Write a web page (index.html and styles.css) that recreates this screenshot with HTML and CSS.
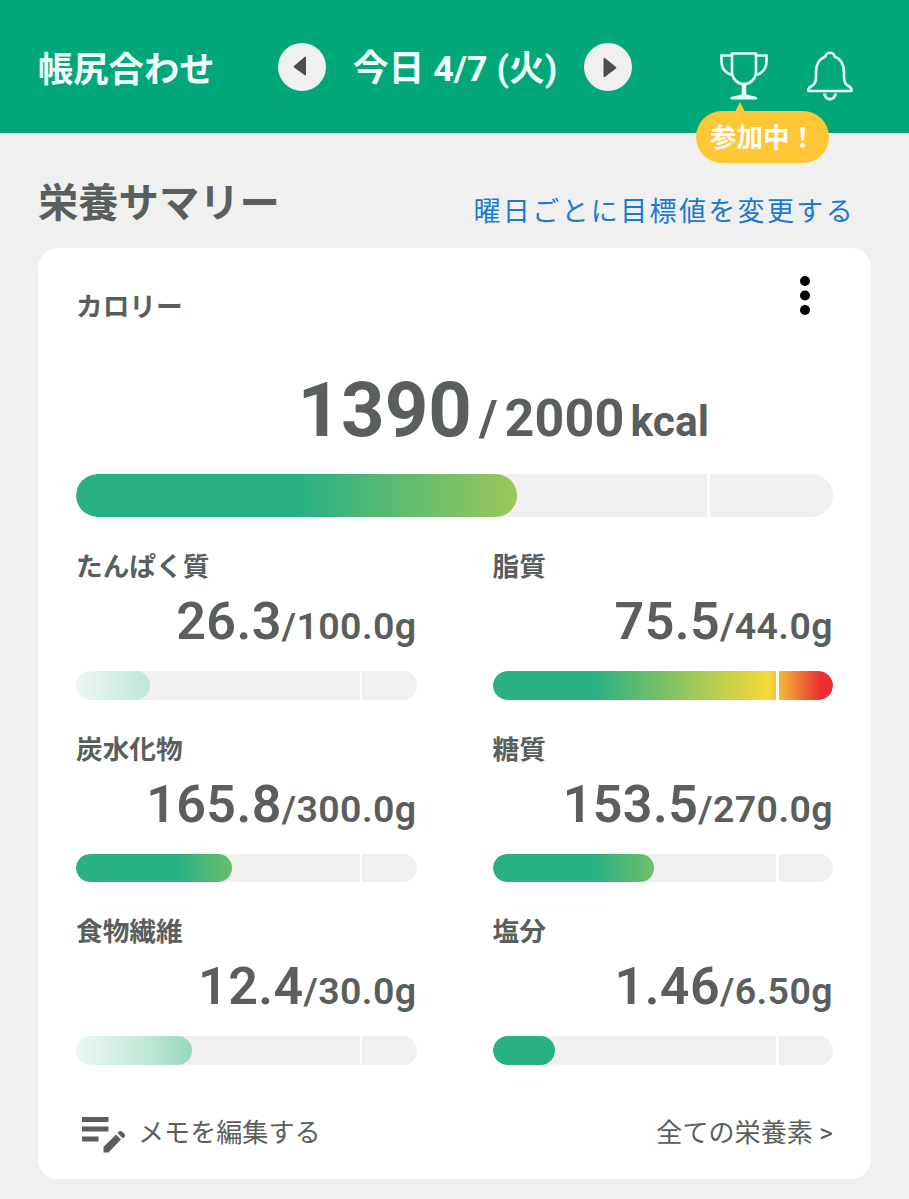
FILE: index.html
```html
<!DOCTYPE html>
<html lang="ja">
<head>
    <meta charset="UTF-8">
    <meta name="viewport" content="width=device-width, initial-scale=1.0">
    <title>栄養サマリー</title>
    <link rel="stylesheet" href="styles.css">
</head>
<body>
    <header class="header">
        <div class="header-title">帳尻合わせ</div>
        <div class="date-nav">
            <button class="nav-btn" aria-label="前の日">
                <svg width="48" height="48" viewBox="0 0 48 48"><path d="M16 23 L26.5 14 Q28 13 28 14.500 V31.500 Q28 33 26.500 32 L16 24.500 Q15 23.700 16 23Z" fill="#4d4d4d"/></svg>
            </button>
            <span class="date">今日 4/7 (火)</span>
            <button class="nav-btn" aria-label="次の日">
                <svg width="48" height="48" viewBox="0 0 48 48"><path d="M32 24 L21.500 15.500 Q19.500 14 19.500 16 V33 Q19.500 35 21.500 33.500 L32 25.500 Q33 24.700 32 24Z" fill="#4d4d4d"/></svg>
            </button>
        </div>
        <div class="header-icons">
            <div class="trophy">
                <svg width="50" height="50" viewBox="0 0 50 50" fill="none" stroke="#e9fffa" stroke-width="2.600" stroke-linejoin="round" stroke-linecap="round">
                    <path d="M13 2.500H37V20C37 28 31.500 33 25 33S13 28 13 20Z"/>
                    <path d="M13 4.500H2.500V10C2.500 17 6 22 13 24M37 4.500H47.500V10C47.500 17 44 22 37 24"/>
                    <path d="M25 34V45" stroke-width="4.500" stroke-linecap="butt"/>
                    <path d="M12.500 47.200C18 45.500 21 46 25 44C29 46 32 45.500 37 47.200Z" fill="#e9fffa"/>
                </svg>
                <div class="badge">参加中！</div>
            </div>
            <svg width="46" height="50" viewBox="0 0 46 50" fill="none" stroke="#e9fffa" stroke-width="2.600" stroke-linejoin="round">
                <path d="M18.500 5.500C18.500 0.500 27.500 0.500 27.500 5.500C34 8 37 14 37 21V25C37 31 38 33 40.500 34.500C43.500 36 44.500 37 44.500 38.500V40H1.500V38.500C1.500 37 2.500 36 5.500 34.500C8 33 9 31 9 25V21C9 14 12 8 18.500 5.500Z"/>
                <path d="M17.500 42.500C18 50 28 50 28.500 42.500" stroke-width="3"/>
            </svg>
        </div>
    </header>

    <main>
        <div class="section-head">
            <h1>栄養サマリー</h1>
            <a class="goal-link">曜日ごとに目標値を変更する</a>
        </div>

        <section class="card">
            <div class="card-head">
                <h2 class="label">カロリー</h2>
                <svg class="menu" width="12" height="42" viewBox="0 0 12 42"><circle cx="6" cy="7" r="5"/><circle cx="6" cy="21.500" r="5"/><circle cx="6" cy="36" r="5"/></svg>
            </div>
            <div class="calories">
                <span class="current">1390</span><span class="slash">/</span><span class="goal">2000</span><span class="unit">kcal</span>
            </div>
            <div class="bar bar-large"><div class="fill" style="width: 58.300%"></div></div>

            <div class="nutrients">
                <div class="nutrient">
                    <h2 class="label">たんぱく質</h2>
                    <div class="amount"><span class="value">26.3</span><span class="target">/100.0g</span></div>
                    <div class="bar"><div class="fill low" style="width: 21.700%"></div></div>
                </div>
                <div class="nutrient">
                    <h2 class="label">脂質</h2>
                    <div class="amount"><span class="value">75.5</span><span class="target">/44.0g</span></div>
                    <div class="bar"><div class="fill" style="width: 100%"></div></div>
                </div>
                <div class="nutrient">
                    <h2 class="label">炭水化物</h2>
                    <div class="amount"><span class="value">165.8</span><span class="target">/300.0g</span></div>
                    <div class="bar"><div class="fill" style="width: 45.700%"></div></div>
                </div>
                <div class="nutrient">
                    <h2 class="label">糖質</h2>
                    <div class="amount"><span class="value">153.5</span><span class="target">/270.0g</span></div>
                    <div class="bar"><div class="fill" style="width: 47.500%"></div></div>
                </div>
                <div class="nutrient">
                    <h2 class="label">食物繊維</h2>
                    <div class="amount"><span class="value">12.4</span><span class="target">/30.0g</span></div>
                    <div class="bar"><div class="fill low" style="width: 34%"></div></div>
                </div>
                <div class="nutrient">
                    <h2 class="label">塩分</h2>
                    <div class="amount"><span class="value">1.46</span><span class="target">/6.50g</span></div>
                    <div class="bar"><div class="fill" style="width: 18.300%"></div></div>
                </div>
            </div>

            <div class="card-foot">
                <a class="memo">
                    <svg width="46" height="38" viewBox="0 0 46 38" fill="#5a5f5e">
                        <path d="M1 0H27.500V5H1ZM1 9.500H27.500V14.500H1ZM1 19.500H17.500V24.500H1Z"/>
                        <path d="M22.500 30L35 17.500L40 22.500L27.500 35.500H22.500Z"/>
                        <path d="M36.500 16L38 14.500Q39.500 13.500 41 14.500L43.500 17Q45 18.500 43.500 20L42 21.500Z"/>
                    </svg>
                    <span>メモを編集する</span>
                </a>
                <a>全ての栄養素 &gt;</a>
            </div>
        </section>
    </main>
</body>
</html>
```
FILE: styles.css
```css
* {
    box-sizing: border-box;
}
body {
    margin: 0;
    background: #f0f0f0;
    color: #5a5f5e;
    font-family: Roboto, "Noto Sans CJK JP", sans-serif;
}
h1, h2 {
    margin: 0;
}
.header {
    display: flex;
    height: 133px;
    padding: 43px 56px 0 38px;
    background: #02a779;
    color: #f0fffc;
    font-weight: 700;
    white-space: nowrap;
}
.header-title {
    width: 240px;
    font-size: 35.3px;
    line-height: 54px;
}
.date-nav {
    display: flex;
    justify-content: space-between;
    width: 354px;
    height: 48px;
}
.date {
    font-size: 35.8px;
    line-height: 53px;
}
.nav-btn {
    width: 48px;
    height: 48px;
    padding: 0;
    border: 0;
    border-radius: 50%;
    background: #f0f0f0;
}
.nav-btn svg {
    display: block;
}
.header-icons {
    display: flex;
    gap: 38px;
    margin-left: auto;
    padding-top: 8px;
}
.trophy {
    position: relative;
    height: 50px;
}
.badge {
    position: absolute;
    top: 60px;
    left: -23px;
    width: 133px;
    height: 52px;
    padding-left: 14px;
    border-radius: 26px;
    background: #ffc736;
    color: #fff;
    font-size: 26.5px;
    line-height: 54px;
}
.badge::before {
    content: "";
    position: absolute;
    top: -9px;
    left: 39px;
    border: 5px solid transparent;
    border-top: 0;
    border-bottom: 10px solid #ffc736;
}
main {
    padding: 0 38px;
}
.section-head {
    display: flex;
    justify-content: space-between;
    height: 115px;
    padding: 41px 16px 0 0;
}
h1 {
    font-size: 40.3px;
    line-height: 60px;
}
.goal-link {
    padding-top: 18px;
    color: #1b79d2;
    font-size: 27px;
    line-height: 40px;
    letter-spacing: 2.35px;
}
.card {
    height: 931px;
    padding: 26px 38px 0;
    border-radius: 20px;
    background: #fff;
}
.card-head {
    display: flex;
    justify-content: space-between;
    height: 91px;
    padding-right: 22px;
}
.card-head .label {
    padding-top: 16px;
}
.label {
    font-size: 26.7px;
    line-height: 34px;
}
.calories {
    display: flex;
    align-items: baseline;
    justify-content: flex-end;
    height: 90px;
    padding-right: 124px;
    font-weight: 700;
    line-height: 90px;
}
.current {
    font-size: 76px;
}
.slash {
    margin: 0 7px 0 7px;
    font-size: 50px;
}
.goal {
    font-size: 52px;
    letter-spacing: 0.2px;
}
.unit {
    margin-left: 6px;
    font-size: 42.5px;
}
/* width of the full scale, also used by the gradient */
.bar {
    --scale: 341px;
    position: relative;
    height: 28.5px;
    margin-top: 19px;
    border-radius: 30px;
    background: #f0f0f0;
    overflow: hidden;
}
.bar-large {
    --scale: 757px;
    height: 43px;
}
/* goal marker */
.bar::after {
    content: "";
    position: absolute;
    top: 0;
    bottom: 0;
    left: 83.4%;
    width: 2.5px;
    background: #fff;
}
.fill {
    height: 100%;
    border-radius: 30px;
    background: linear-gradient(90deg, #2ab183 30%, #f7da38 81%, #e9302e 96%) 0 0 / var(--scale) 100% no-repeat;
}
.fill.low {
    background-image: linear-gradient(90deg, #edf8f3 0%, #bde7d6 21.7%, #97d9bf 34%);
}
.nutrients {
    display: grid;
    grid-template-columns: 1fr 1fr;
    gap: 33.2px 76px;
    margin-top: 33px;
}
.amount {
    display: flex;
    align-items: baseline;
    justify-content: flex-end;
    height: 60px;
    margin-top: 8px;
    font-weight: 600;
    line-height: 60px;
}
.value {
    font-size: 52px;
    letter-spacing: 0.4px;
}
.target {
    font-size: 37.5px;
    letter-spacing: 0.4px;
}
.card-foot {
    display: flex;
    justify-content: space-between;
    margin-top: 50px;
    font-size: 26.1px;
    line-height: 37px;
}
.memo {
    display: flex;
    gap: 11px;
    padding-left: 5px;
}
.memo svg {
    margin-top: 2px;
}
```
